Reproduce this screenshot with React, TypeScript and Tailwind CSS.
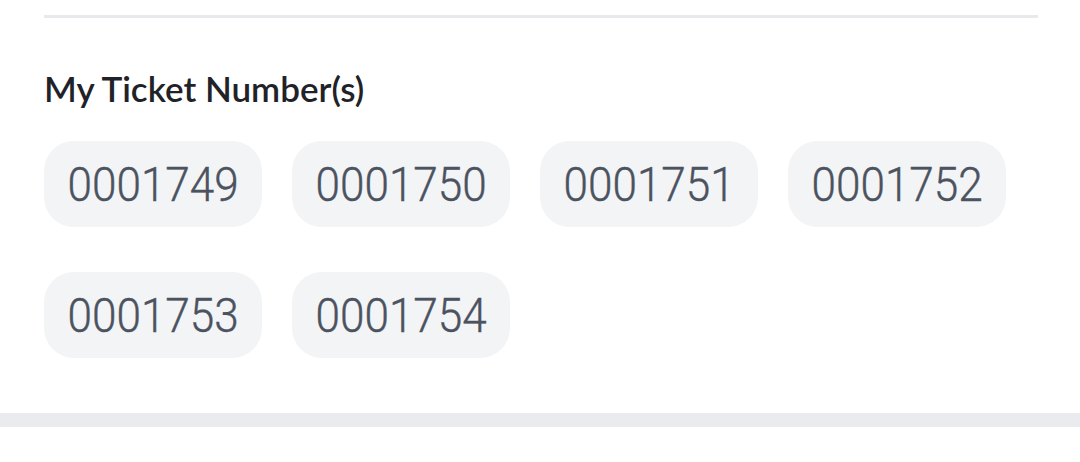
const TICKETS = ["0001749", "0001750", "0001751", "0001752", "0001753", "0001754"];

export default function App() {
  return (
    <div className="h-[462px] w-[1080px] bg-white">
      <div className="pl-[44px] pr-[42px] pt-[15px]">
        <div className="h-[3px] bg-[#e8e9ec]" />
        <h2
          className="mt-[50px] text-[35px] font-semibold leading-[40px] text-[#1f2329]"
          style={{ fontFamily: '"Lato", "Noto Sans", sans-serif' }}
        >
          My Ticket Number(s)
        </h2>
        <div className="mt-[33px] flex flex-wrap gap-x-[30px] gap-y-[45px] pb-[55px]">
          {TICKETS.map((t) => (
            <div
              key={t}
              className="flex h-[86px] w-[218px] items-center justify-center rounded-[30px] bg-[#f3f4f6] text-[#4b5260]"
            >
              <span
                className="inline-block scale-x-[0.9] text-[49px] font-light leading-none [-webkit-text-stroke:0.4px_#4b5260]"
                style={{ fontFamily: '"Roboto", sans-serif' }}
              >
                {t}
              </span>
            </div>
          ))}
        </div>
      </div>
      <div className="h-[14px] bg-[#eaebef]" />
    </div>
  );
}
